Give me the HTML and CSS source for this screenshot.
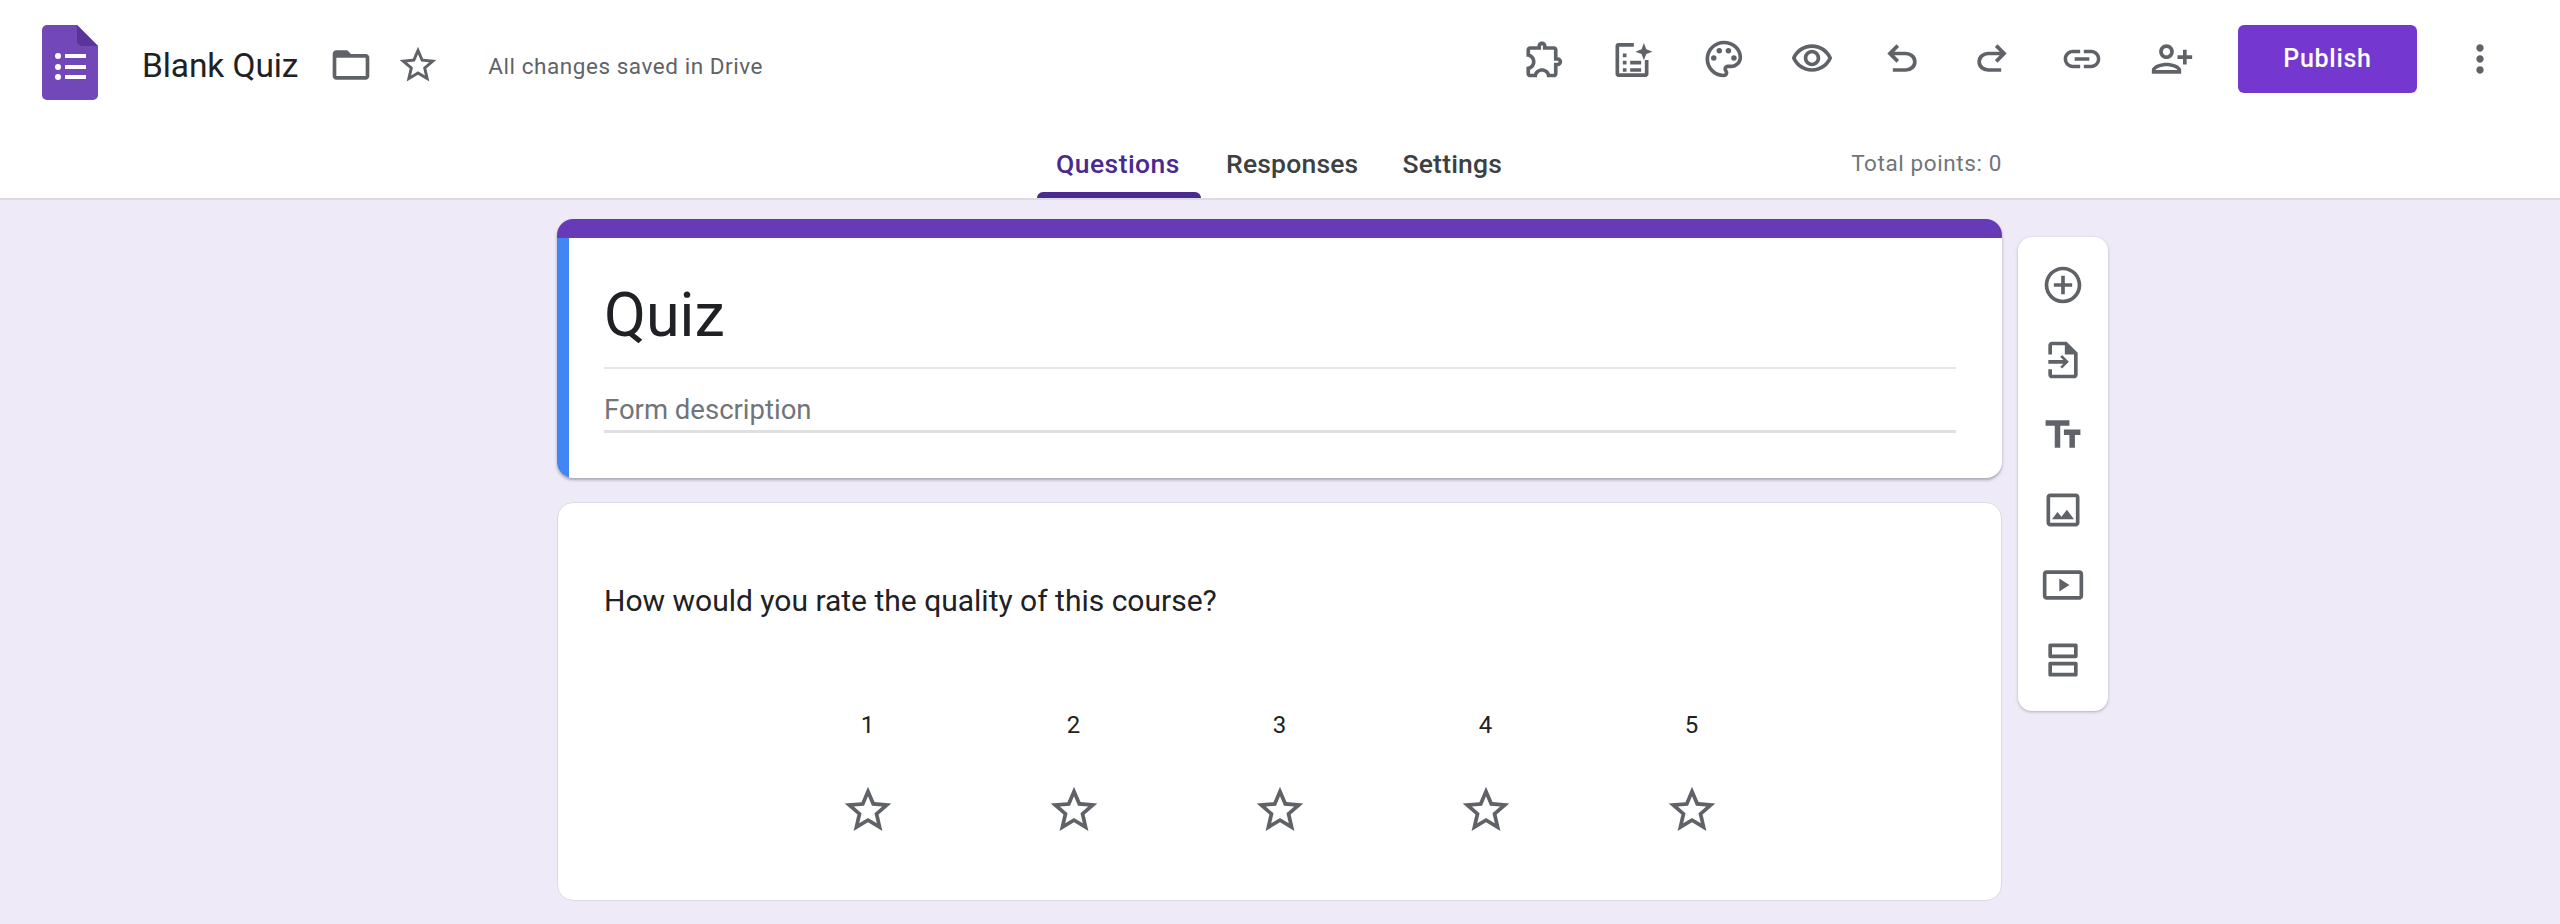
FILE: index.html
```html
<!DOCTYPE html>
<html lang="en">
<head>
    <meta charset="UTF-8">
    <meta name="viewport" content="width=device-width, initial-scale=1.0">
    <title>Blank Quiz</title>
    <link rel="stylesheet" href="styles.css">
</head>
<body>

    <svg class="defs" aria-hidden="true">
        <symbol id="star" viewBox="0 0 24 24">
            <path d="M22 9.24l-7.19-.62L12 2 9.19 8.63 2 9.24l5.46 4.73L5.82 21 12 17.27 18.18 21l-1.63-7.03L22 9.24zM12 15.4l-3.76 2.27 1-4.28-3.32-2.88 4.38-.38L12 6.1l1.71 4.04 4.38.38-3.32 2.88 1 4.28L12 15.4z"/>
        </symbol>
    </svg>

    <header class="header">
        <div class="top-row">
            <svg class="logo" viewBox="0 0 56 75">
                <path fill="#7248b9" d="M5 0h30l21 21v49a5 5 0 0 1-5 5H5a5 5 0 0 1-5-5V5a5 5 0 0 1 5-5z"/>
                <path fill="#5a3597" d="M35 0l21 21H40a5 5 0 0 1-5-5z"/>
                <g fill="#fff">
                    <circle cx="16" cy="31" r="3"/>
                    <circle cx="16" cy="42" r="3"/>
                    <circle cx="16" cy="52" r="3"/>
                    <rect x="23" y="29" width="21" height="4"/>
                    <rect x="23" y="40" width="21" height="4"/>
                    <rect x="23" y="50" width="21" height="4"/>
                </g>
            </svg>
            <span class="doc-title">Blank Quiz</span>
            <svg class="icon folder-icon" viewBox="0 0 24 24"><path d="M20 6h-8l-2-2H4c-1.1 0-1.99.9-1.99 2L2 18c0 1.1.9 2 2 2h16c1.1 0 2-.9 2-2V8c0-1.1-.9-2-2-2zm0 12H4V8h16v10z"/></svg>
            <svg class="icon star-icon" viewBox="0 0 24 24"><use href="#star"/></svg>
            <span class="save-status">All changes saved in Drive</span>

            <div class="actions">
                <span class="action"><svg class="icon" viewBox="-1.5 0 24 24"><path d="M10.5 4.5c.28 0 .5.22.5.5v2h6v6h2c.28 0 .5.22.5.5s-.22.5-.5.5h-2v6h-2.12c-.68-1.75-2.39-3-4.38-3s-3.7 1.25-4.38 3H4v-2.12c1.75-.68 3-2.39 3-4.38 0-1.99-1.24-3.7-2.99-4.38L4 7h6V5c0-.28.22-.5.5-.5m0-2C9.12 2.5 8 3.62 8 5H4c-1.1 0-1.99.9-1.99 2v3.8h.29c1.49 0 2.7 1.21 2.7 2.7s-1.21 2.7-2.7 2.7H2V20c0 1.1.9 2 2 2h3.8v-.3c0-1.49 1.21-2.7 2.7-2.7s2.7 1.21 2.7 2.7v.3H17c1.1 0 2-.9 2-2v-4c1.38 0 2.5-1.12 2.5-2.5S20.38 11 19 11V7c0-1.1-.9-2-2-2h-4c0-1.38-1.12-2.5-2.5-2.5z"/></svg></span>
                <span class="action"><svg class="icon" viewBox="0 0 24 24"><path d="M13 3.3H4.6A1.6 1.6 0 0 0 3 4.9v15.3c0 .9.7 1.6 1.6 1.6h14.8c.9 0 1.6-.7 1.6-1.6v-7.7h-2v7.3H5V5.3h8z"/><path d="M7 9h2v2H7zM7 13h2v2H7zM7 17h2v2H7zM11 13h6v2h-6zM11 17h6v2h-6z"/><path d="M18.5 3.3l1.3 3.4 3.4 1.3-3.4 1.3-1.3 3.4-1.3-3.4-3.4-1.3 3.4-1.3z"/></svg></span>
                <span class="action"><svg class="icon" viewBox="-1 0 24 24"><path d="M12 22C6.49 22 2 17.51 2 12S6.49 2 12 2s10 4.04 10 9c0 3.31-2.69 6-6 6h-1.77c-.28 0-.5.22-.5.5 0 .12.05.23.13.33.41.47.64 1.06.64 1.67A2.5 2.5 0 0 1 12 22zm0-18c-4.41 0-8 3.59-8 8s3.59 8 8 8c.28 0 .5-.22.5-.5a.54.54 0 0 0-.14-.35c-.41-.46-.63-1.05-.63-1.65a2.5 2.5 0 0 1 2.5-2.5H16c2.21 0 4-1.79 4-4 0-3.86-3.59-7-8-7z"/><circle cx="6.5" cy="11.5" r="1.5"/><circle cx="9.5" cy="7.5" r="1.5"/><circle cx="14.5" cy="7.5" r="1.5"/><circle cx="17.5" cy="11.5" r="1.5"/></svg></span>
                <span class="action"><svg class="icon" viewBox="0 0 24 24"><path d="M12 6c3.79 0 7.17 2.13 8.82 5.5C19.17 14.87 15.79 17 12 17s-7.17-2.13-8.82-5.5C4.83 8.13 8.21 6 12 6m0-2C7 4 2.73 7.11 1 11.5 2.73 15.89 7 19 12 19s9.27-3.11 11-7.5C21.27 7.11 17 4 12 4zm0 5c1.38 0 2.5 1.12 2.5 2.5S13.38 14 12 14s-2.5-1.12-2.5-2.5S10.62 9 12 9m0-2c-2.48 0-4.5 2.02-4.5 4.5S9.52 16 12 16s4.5-2.02 4.5-4.5S14.48 7 12 7z"/></svg></span>
                <span class="action"><svg class="icon" viewBox="0 -960 960 960"><path d="M280-200v-80h284q63 0 109.5-40T720-420q0-60-46.5-100T564-560H312l104 104-56 56-200-200 200-200 56 56-104 104h252q97 0 166.5 63T800-420q0 94-69.5 157T564-200H280Z"/></svg></span>
                <span class="action"><svg class="icon" viewBox="0 -960 960 960"><path d="M396-200q-97 0-166.5-63T160-420q0-94 69.5-157T396-640h252L544-744l56-56 200 200-200 200-56-56 104-104H396q-63 0-109.5 40T240-420q0 60 46.5 100T396-280h284v80H396Z"/></svg></span>
                <span class="action"><svg class="icon" viewBox="0 0 24 24"><path d="M3.9 12c0-1.71 1.39-3.1 3.1-3.1h4V7H7c-2.76 0-5 2.24-5 5s2.24 5 5 5h4v-1.9H7c-1.71 0-3.1-1.39-3.1-3.1zM8 13h8v-2H8v2zm9-6h-4v1.9h4c1.71 0 3.1 1.39 3.1 3.1s-1.39 3.1-3.1 3.1h-4V17h4c2.76 0 5-2.24 5-5s-2.24-5-5-5z"/></svg></span>
                <span class="action"><svg class="icon flipped" viewBox="0 0 24 24"><path d="M15 12c2.21 0 4-1.79 4-4s-1.79-4-4-4-4 1.79-4 4 1.79 4 4 4zm0-6c1.1 0 2 .9 2 2s-.9 2-2 2-2-.9-2-2 .9-2 2-2zm0 8c-2.67 0-8 1.34-8 4v2h16v-2c0-2.66-5.33-4-8-4zm-6 4c.22-.72 3.31-2 6-2 2.7 0 5.8 1.29 6 2H9zm-3-3v-3h3v-2H6V7H4v3H1v2h3v3h2z"/></svg></span>
                <button class="publish" type="button">Publish</button>
                <svg class="icon more-icon" viewBox="0 0 24 24"><path d="M12 8c1.1 0 2-.9 2-2s-.9-2-2-2-2 .9-2 2 .9 2 2 2zm0 2c-1.1 0-2 .9-2 2s.9 2 2 2 2-.9 2-2-.9-2-2-2zm0 6c-1.1 0-2 .9-2 2s.9 2 2 2 2-.9 2-2-.9-2-2-2z"/></svg>
            </div>
        </div>

        <div class="tab-row">
            <nav class="tabs">
                <span class="tab active">Questions</span>
                <span class="tab">Responses</span>
                <span class="tab">Settings</span>
            </nav>
            <span class="total-points">Total points: 0</span>
        </div>
    </header>

    <main class="page">
        <div class="cards">
            <section class="card title-card">
                <div class="title-band"></div>
                <div class="title-body">
                    <h1 class="form-title">Quiz</h1>
                    <div class="form-description">Form description</div>
                </div>
            </section>

            <section class="card question-card">
                <div class="question-text">How would you rate the quality of this course?</div>
                <div class="rating">
                    <div class="rating-item"><span>1</span><svg class="icon rating-star" viewBox="0 0 24 24"><use href="#star"/></svg></div>
                    <div class="rating-item"><span>2</span><svg class="icon rating-star" viewBox="0 0 24 24"><use href="#star"/></svg></div>
                    <div class="rating-item"><span>3</span><svg class="icon rating-star" viewBox="0 0 24 24"><use href="#star"/></svg></div>
                    <div class="rating-item"><span>4</span><svg class="icon rating-star" viewBox="0 0 24 24"><use href="#star"/></svg></div>
                    <div class="rating-item"><span>5</span><svg class="icon rating-star" viewBox="0 0 24 24"><use href="#star"/></svg></div>
                </div>
            </section>
        </div>

        <aside class="toolbar">
            <svg class="icon" viewBox="0 0 24 24"><path d="M13 7h-2v4H7v2h4v4h2v-4h4v-2h-4V7zm-1-5C6.48 2 2 6.48 2 12s4.48 10 10 10 10-4.48 10-10S17.52 2 12 2zm0 18c-4.41 0-8-3.59-8-8s3.59-8 8-8 8 3.59 8 8-3.59 8-8 8z"/></svg>
            <svg class="icon" viewBox="0 0 24 24"><path d="M14 2H6c-1.1 0-2 .9-2 2v5h2V4h7v5h5v11H6v-3H4v3c0 1.1.9 2 2 2h12c1.1 0 2-.9 2-2V8l-6-6z"/><path d="M4 12h8.2l-1.7-1.7 1-1L15.2 13l-3.7 3.7-1-1 1.7-1.7H4z"/></svg>
            <svg class="icon" viewBox="0 0 24 24"><path d="M2.5 4v3h5v12h3V7h5V4h-13zm19 5h-9v3h3v7h3v-7h3V9z"/></svg>
            <svg class="icon" viewBox="0 0 24 24"><path d="M19 5v14H5V5h14m0-2H5c-1.1 0-2 .9-2 2v14c0 1.1.9 2 2 2h14c1.1 0 2-.9 2-2V5c0-1.1-.9-2-2-2zm-4.86 8.86l-3 3.87L9 13.14 6 17h12l-3.86-5.14z"/></svg>
            <svg class="icon" viewBox="0 0 24 24"><path d="M21 4H3c-1.1 0-2 .9-2 2v12c0 1.1.9 2 2 2h18c1.1 0 2-.9 2-2V6c0-1.1-.9-2-2-2zm0 14H3V6h18v12z"/><path d="M10 8.5v7l5.5-3.5z"/></svg>
            <svg class="icon" viewBox="0 0 24 24"><path d="M19 3H5c-.6 0-1 .4-1 1v6c0 .6.4 1 1 1h14c.6 0 1-.4 1-1V4c0-.6-.4-1-1-1zm-1 6H6V5h12v4zM19 13H5c-.6 0-1 .4-1 1v6c0 .6.4 1 1 1h14c.6 0 1-.4 1-1v-6c0-.6-.4-1-1-1zm-1 6H6v-4h12v4z"/></svg>
        </aside>
    </main>

</body>
</html>
```

FILE: styles.css
```css
* {
    box-sizing: border-box;
}
html, body {
    height: 924px;
    overflow: hidden;
}
body {
    margin: 0;
    font-family: Roboto, Arial, sans-serif;
    background-color: #eeeaf8;
    color: #202124;
}
.defs {
    display: none;
}
.icon {
    display: block;
    flex: none;
    width: 44px;
    height: 44px;
    fill: #5f6368;
}
.flipped {
    transform: scaleX(-1);
}

/* header */
.header {
    height: 200px;
    background: white;
    border-bottom: 2px solid #dcdbe0;
}
.top-row {
    display: flex;
    align-items: center;
    height: 117px;
    padding: 0 58px 0 42px;
}
.logo {
    width: 56px;
    height: 75px;
    flex: none;
    margin-top: 8px;
}
.doc-title {
    margin-left: 44px;
    margin-top: 13px;
    font-size: 33.5px;
    letter-spacing: -0.1px;
}
.folder-icon {
    margin-left: 31px;
    margin-top: 13px;
}
.star-icon {
    margin-left: 23px;
    margin-top: 13px;
}
.save-status {
    margin-left: 48px;
    margin-top: 15px;
    font-size: 22.5px;
    letter-spacing: 0.55px;
    color: #5f6368;
}
.actions {
    display: flex;
    align-items: center;
    margin-left: auto;
}
.action {
    display: flex;
    justify-content: center;
    width: 90px;
}
.publish {
    width: 179px;
    height: 68px;
    margin-left: 21px;
    margin-right: 41px;
    border: none;
    border-radius: 6px;
    background: #7438d0;
    color: white;
    font-family: Roboto, Arial, sans-serif;
    font-size: 25px;
    font-weight: 500;
    letter-spacing: 0.7px;
}

/* tabs */
.tab-row {
    display: flex;
    height: 81px;
    padding: 0 558px 0 1037px;
}
.tabs {
    display: flex;
    gap: 6px;
}
.tab {
    position: relative;
    display: flex;
    align-items: center;
    height: 81px;
    padding: 11px 19px 0;
    font-size: 26.5px;
    font-weight: 500;
    letter-spacing: 0.2px;
    color: #3c4043;
}
.tab.active {
    width: 164px;
    color: #4a2a8f;
    letter-spacing: 0.45px;
}
.tab.active::after {
    content: "";
    position: absolute;
    left: 0;
    right: 0;
    bottom: 0;
    height: 6px;
    border-radius: 6px 6px 0 0;
    background: #4a2a8f;
}
.total-points {
    margin-left: auto;
    padding-top: 30px;
    font-size: 22.5px;
    letter-spacing: 0.6px;
    line-height: 32px;
    color: #70757a;
}

/* main */
.page {
    display: flex;
    align-items: flex-start;
    gap: 16px;
    padding: 19px 0 0 557px;
}
.cards {
    display: flex;
    flex-direction: column;
    gap: 24px;
    width: 1445px;
}
.card {
    background: white;
    border-radius: 16px;
    overflow: hidden;
}
.title-card {
    height: 259px;
    box-shadow: 0 2px 3px rgba(60, 64, 67, 0.4);
}
.title-band {
    height: 19px;
    background: #673ab7;
}
.title-body {
    height: 240px;
    padding: 0 46px 0 35px;
    border-left: 12px solid #4285f4;
}
.form-title {
    margin: 0;
    padding-top: 41px;
    height: 131px;
    border-bottom: 2px solid #e6e6e8;
    font-size: 61px;
    font-weight: 400;
    line-height: 72px;
}
.form-description {
    height: 64px;
    padding-top: 23px;
    border-bottom: 3px solid #e0e0e0;
    font-size: 27.5px;
    line-height: 36px;
    color: #70757a;
}
.question-card {
    height: 399px;
    padding: 0 46px;
    border: 1px solid #dadce0;
}
.question-text {
    padding-top: 79px;
    font-size: 30px;
    line-height: 38px;
}
.rating {
    display: flex;
    justify-content: center;
    margin: 89px -46px 0;
}
.rating-item {
    display: flex;
    flex-direction: column;
    align-items: center;
    gap: 41px;
    width: 206px;
    font-size: 24px;
    line-height: 32px;
}
.rating-star {
    width: 56px;
    height: 56px;
}
.toolbar {
    display: flex;
    flex-direction: column;
    align-items: center;
    gap: 31px;
    width: 90px;
    height: 474px;
    padding-top: 26px;
    margin-top: 18px;
    background: white;
    border-radius: 14px;
    box-shadow: 0 1px 3px rgba(60, 64, 67, 0.35);
}
```
